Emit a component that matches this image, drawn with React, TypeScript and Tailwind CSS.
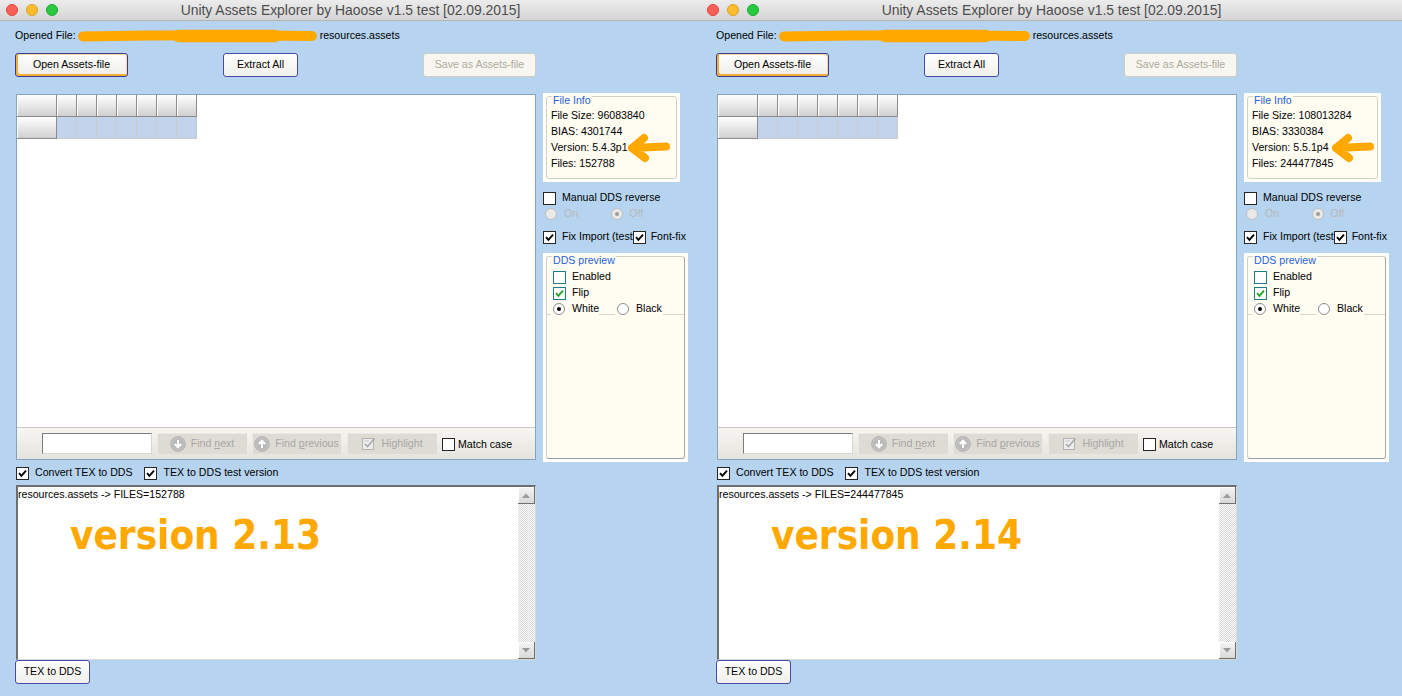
import React from "react";

type WinProps = {
  blob: number;
  fileSize: string;
  bias: string;
  version: string;
  files: string;
  tag: string;
  arrowX: string;
};

const UI = "font-['Liberation_Sans',Arial,sans-serif]";

function Check({ on, tone = "plain" }: { on?: boolean; tone?: "plain" | "teal" }) {
  return (
    <span
      className={`w-[13px] h-[13px] shrink-0 flex items-center justify-center bg-white border ${
        tone === "teal" ? "border-[#1e7c86]" : "border-[#262626]"
      }`}
    >
      {on && (
        <svg width="9" height="9" viewBox="0 0 9 9">
          <path
            d="M1 4.2 L3.4 6.8 L8 1.6"
            fill="none"
            stroke={tone === "teal" ? "#22a322" : "#000"}
            strokeWidth="1.9"
          />
        </svg>
      )}
    </span>
  );
}

function Radio({ on, off }: { on?: boolean; off?: boolean }) {
  return (
    <span
      className={`w-[12px] h-[12px] rounded-full border flex items-center justify-center shrink-0 ${
        off ? "border-[#bdbdbd] bg-[#e9e9e9]" : "border-[#8e8e8e] bg-white"
      }`}
    >
      {on && <span className={`w-[4px] h-[4px] rounded-full ${off ? "bg-[#9c9c9c]" : "bg-black"}`} />}
    </span>
  );
}

function Light({ c, b }: { c: string; b: string }) {
  return <span className={`w-[12px] h-[12px] rounded-full border ${c} ${b}`} />;
}

function TitleBar() {
  return (
    <div className="h-[21px] shrink-0 grid grid-cols-[1fr_auto_1fr] items-center bg-gradient-to-b from-[#ececec] to-[#d5d5d5] border-b border-[#b3b3b3]">
      <div className="flex items-center gap-[8px] pl-[6px]">
        <Light c="bg-[#fc5f57]" b="border-[#e0443e]" />
        <Light c="bg-[#fdbc2e]" b="border-[#dea123]" />
        <Light c="bg-[#28c840]" b="border-[#1dad2b]" />
      </div>
      <span className="text-[13.9px] text-[#4d4d4d] font-['Liberation_Sans',Arial,sans-serif]">
        Unity Assets Explorer by Haoose v1.5 test [02.09.2015]
      </span>
      <div />
    </div>
  );
}

function Blob({ w }: { w: number }) {
  return (
    <svg width={w} height={14} viewBox={`0 0 ${w} 14`} className="shrink-0">
      <path d={`M5 7.5 Q ${w / 2} 5.5 ${w - 6} 7`} fill="none" stroke="#ffa800" strokeWidth="10" strokeLinecap="round" />
      <path d={`M${w * 0.42} 7 L${w * 0.82} 7`} fill="none" stroke="#ffa800" strokeWidth="12.5" strokeLinecap="round" />
    </svg>
  );
}

function Btn({ children, w, kind }: { children: React.ReactNode; w: string; kind: "focus" | "normal" | "off" }) {
  const look =
    kind === "focus"
      ? "border-[#3b3b8f] bg-gradient-to-b from-white to-[#eeede7] shadow-[inset_2px_-2px_0_#f4ad38,inset_-1px_1px_0_#fbd89a] text-black"
      : kind === "normal"
      ? "border-[#4a4aa6] bg-gradient-to-b from-white to-[#f0efea] text-black"
      : "border-[#cfcdc2] bg-[#f7f6f1] text-[#aeab9c]";
  return (
    <div className={`h-[24px] ${w} shrink-0 flex items-center justify-center rounded-[3px] border ${look}`}>
      {children}
    </div>
  );
}

function CircleArrow({ up }: { up?: boolean }) {
  return (
    <svg width="16" height="16" viewBox="0 0 16 16" className="shrink-0">
      <circle cx="8" cy="8" r="7.3" fill="#c6c6c6" stroke="#aeaeae" />
      <circle cx="8" cy="8" r="5.8" fill="#b9b9b9" />
      {up ? (
        <path d="M8 12 V5 M4.8 8 L8 4.6 L11.2 8" fill="none" stroke="#fff" strokeWidth="2" />
      ) : (
        <path d="M8 4 V11 M4.8 8 L8 11.4 L11.2 8" fill="none" stroke="#fff" strokeWidth="2" />
      )}
    </svg>
  );
}

function HighlightIcon() {
  return (
    <svg width="15" height="15" viewBox="0 0 15 15" className="shrink-0">
      <rect x="1.5" y="2.5" width="11" height="11" fill="#ececec" stroke="#b4b4b4" />
      <path d="M4 8 L6.5 10.5 L13.5 2.5" fill="none" stroke="#a9a9a9" strokeWidth="1.6" />
      <path d="M3.5 5 H8" stroke="#c4c4c4" />
    </svg>
  );
}

function FindBtn({ children, w, icon }: { children: React.ReactNode; w: string; icon: React.ReactNode }) {
  return (
    <div className={`h-[21px] ${w} shrink-0 flex items-center justify-center gap-[5px] bg-[#dedbd4] text-[#a7a7a7] shadow-[inset_1px_1px_0_#ebe9e4]`}>
      {icon}
      <span>{children}</span>
    </div>
  );
}

function ScrollBtn({ up }: { up?: boolean }) {
  return (
    <div className="h-[17px] w-[17px] flex items-center justify-center bg-gradient-to-b from-[#f4f4f4] to-[#d9d9d9] border-r border-b border-[#6f6f6f] shadow-[inset_1px_1px_0_#fff]">
      <svg width="8" height="5" viewBox="0 0 8 5">
        {up ? <path d="M0 5 L4 0.5 L8 5 Z" fill="#9a9a9a" /> : <path d="M0 0 L4 4.5 L8 0 Z" fill="#9a9a9a" />}
      </svg>
    </div>
  );
}

function Legend({ children }: { children: React.ReactNode }) {
  return (
    <span className="absolute left-[9px] top-[1px] px-px bg-[#fffcf2] text-[#2862d8] leading-[13px]">{children}</span>
  );
}

function Grid() {
  const cols = [0, 1, 2, 3, 4, 5, 6];
  const head = "bg-gradient-to-b from-white to-[#d0d0d0] border-r border-b border-[#8b8b8b] shadow-[inset_1px_1px_0_#fff]";
  return (
    <div className="flex flex-col">
      <div className="flex h-[22px]">
        <div className={`w-[40px] ${head}`} />
        {cols.map((c) => (
          <div key={c} className={`w-[20px] ${head}`} />
        ))}
      </div>
      <div className="flex h-[22px]">
        <div className={`w-[40px] ${head}`} />
        {cols.map((c) => (
          <div key={c} className="w-[20px] bg-[#c2d4ec] border-r border-b border-[#cbcbcb]" />
        ))}
      </div>
    </div>
  );
}

function Window({ blob, fileSize, bias, version, files, tag, arrowX }: WinProps) {
  return (
    <div className={`w-[701px] h-[696px] shrink-0 flex flex-col bg-[#b6d4f0] text-[10.6px] text-black ${UI}`}>
      <TitleBar />

      <div className="flex flex-col pl-[15px]">
        {/* opened file */}
        <div className="mt-[8px] h-[14px] flex items-center gap-[2px]">
          <span>Opened File:</span>
          <Blob w={blob} />
          <span>resources.assets</span>
        </div>

        {/* top buttons */}
        <div className="mt-[10px] flex">
          <Btn w="w-[113px]" kind="focus">Open Assets-file</Btn>
          <div className="w-[95px]" />
          <Btn w="w-[75px]" kind="normal">Extract All</Btn>
          <div className="w-[125px]" />
          <Btn w="w-[113px]" kind="off">Save as Assets-file</Btn>
        </div>

        {/* main */}
        <div className="mt-[16px] ml-px flex gap-[7px]">
          <div className="w-[520px] pt-px flex flex-col">
            <div className="h-[366px] border border-[#8aa3bd] bg-white flex flex-col">
              <Grid />
              <div className="flex-1" />
              <div className="h-[32px] border-t border-[#c9c7c0] bg-gradient-to-b from-[#f7f6f3] to-[#e5e3dd] flex items-center">
                <div className="ml-[25px] w-[110px] h-[21px] bg-white border border-[#7b7b7b] border-b-[#d6d6d6] border-r-[#d6d6d6]" />
                <div className="w-[5px]" />
                <FindBtn w="w-[90px]" icon={<CircleArrow />}>
                  Find <span className="underline">n</span>ext
                </FindBtn>
                <div className="w-[5px]" />
                <FindBtn w="w-[89px]" icon={<CircleArrow up />}>
                  Find <span className="underline">p</span>revious
                </FindBtn>
                <div className="w-[6px]" />
                <FindBtn w="w-[90px]" icon={<HighlightIcon />}>
                  Highlight
                </FindBtn>
                <div className="ml-[5px] mt-[2px] flex items-center gap-[3px]">
                  <Check />
                  <span>Match case</span>
                </div>
              </div>
            </div>

            <div className="mt-[6px] h-[14px] flex items-center">
              <Check on />
              <span className="ml-[6px]">Convert TEX to DDS</span>
              <span className="ml-[11px]">
                <Check on />
              </span>
              <span className="ml-[7px]">TEX to DDS test version</span>
            </div>

            <div className="mt-[5px] h-[175px] flex border-t-2 border-l-2 border-[#6e6e6e] border-r border-b border-r-[#d8d8d8] border-b-[#d8d8d8] bg-white">
              <div className="flex-1 flex flex-col">
                <span className="h-[13px] leading-[13px] mt-px">resources.assets -&gt; FILES={files}</span>
                <span className="ml-[52px] mt-[14px] text-[40px] leading-none font-bold text-[#ffa800] font-['DejaVu_Sans_Condensed','DejaVu_Sans',sans-serif] font-stretch-condensed">
                  {tag}
                </span>
              </div>
              <div className="w-[17px] flex flex-col bg-[repeating-conic-gradient(#d6d6d6_0_25%,#ffffff_0_50%)] bg-[length:2px_2px]">
                <ScrollBtn up />
                <div className="flex-1" />
                <ScrollBtn />
              </div>
            </div>

            <div className="-ml-px">
              <Btn w="w-[75px]" kind="normal">TEX to DDS</Btn>
            </div>
          </div>

          {/* side panel */}
          <div className="w-[145px] flex flex-col">
            <div className="relative w-[137px] h-[89px] bg-[#fffefa] p-[3px]">
              <div className="h-full rounded-[3px] border border-[#d2d2c4] bg-[#fffcf2] pl-[4px] pt-[10px] flex flex-col">
                <span className="h-[16px] leading-[16px]">File Size: {fileSize}</span>
                <span className="h-[16px] leading-[16px]">BIAS: {bias}</span>
                <span className="h-[16px] leading-[16px]">Version: {version}</span>
                <span className="h-[16px] leading-[16px]">Files: {files}</span>
              </div>
              <Legend>File Info</Legend>
              <svg width="42" height="30" viewBox="0 0 42 30" className={`absolute top-[40px] ${arrowX}`}>
                <path
                  d="M4 15 L38 13.5 M4 15 L16 5 M4 15 L17 25"
                  fill="none"
                  stroke="#ffa800"
                  strokeWidth="8"
                  strokeLinecap="round"
                  strokeLinejoin="round"
                />
              </svg>
            </div>

            <div className="mt-[8px] h-[16px] flex items-center">
              <Check />
              <span className="ml-[6px]">Manual DDS reverse</span>
            </div>
            <div className="h-[16px] flex items-center text-[#b8b8b8]">
              <span className="ml-[2px]">
                <Radio off />
              </span>
              <span className="ml-[7px]">On</span>
              <span className="ml-[33px]">
                <Radio on off />
              </span>
              <span className="ml-[6px]">Off</span>
            </div>
            <div className="mt-[7px] h-[16px] flex items-center whitespace-nowrap">
              <Check on />
              <span className="ml-[6px]">Fix Import (test</span>
              <Check on />
              <span className="ml-[5px]">Font-fix</span>
            </div>

            <div className="relative mt-[8px] h-[209px] bg-[#fffefa] p-[3px]">
              <div className="h-full rounded-[3px] border border-[#d2d2c4] border-b-[#9d9d9d] border-r-[#a9a9a9] bg-[#fffcf2] pt-[12px] flex flex-col">
                <div className="h-[16px] pl-[6px] flex items-center gap-[6px]">
                  <Check tone="teal" />
                  <span>Enabled</span>
                </div>
                <div className="h-[16px] pl-[6px] flex items-center gap-[6px]">
                  <Check on tone="teal" />
                  <span>Flip</span>
                </div>
                <div className="relative z-[1] h-[16px] pl-[4px] flex items-center">
                  <div className="w-[48px] h-full flex items-center gap-[7px] pl-[2px] bg-[#fffcf2]">
                    <Radio on />
                    <span>White</span>
                  </div>
                  <div className="ml-[16px] w-[48px] h-full flex items-center gap-[7px] pl-[2px] bg-[#fffcf2]">
                    <Radio />
                    <span>Black</span>
                  </div>
                </div>
                <div className="-mt-[3px] flex-1 border-t border-[#d6d6cb]" />
              </div>
              <Legend>DDS preview</Legend>
            </div>
          </div>
        </div>
      </div>
    </div>
  );
}

export default function App() {
  return (
    <div className="w-[1402px] h-[696px] flex overflow-hidden">
      <Window blob={240} fileSize="96083840" bias="4301744" version="5.4.3p1" files="152788" tag="version 2.13" arrowX="left-[85px]" />
      <Window blob={252} fileSize="108013284" bias="3330384" version="5.5.1p4" files="244477845" tag="version 2.14" arrowX="left-[88px]" />
    </div>
  );
}
